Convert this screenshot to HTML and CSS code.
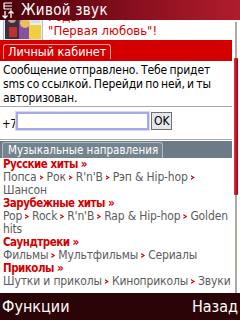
FILE: index.html
```html
<!DOCTYPE html>
<html lang="ru">
<head>
    <meta charset="UTF-8">
    <title>Живой звук</title>
    <link rel="stylesheet" href="styles.css">
</head>
<body>
    <div class="title-bar">
        <svg class="title-icon" width="14" height="18" viewBox="0 0 14 18">
            <path d="M3 2h8M3 5h8M3 8h8M3 2v6" stroke="#fff" stroke-width="1.2" fill="none"/>
            <path d="M4 10v7M1.5 14.5l2.5 2.5 2.5-2.5" stroke="#fff" stroke-width="1.3" fill="none"/>
            <path d="M10 17v-7M7.5 12.5l2.5-2.5 2.5 2.5" stroke="#fff" stroke-width="1.3" fill="none"/>
        </svg>
        <span class="title-text">Живой звук</span>
    </div>

    <div class="screen">
        <div class="page">
            <div class="promo">
                <svg class="promo-pic" width="40" height="30" viewBox="0 0 40 30">
                    <rect x="0.5" y="0.5" width="39" height="29" fill="#f4efe0" stroke="#a8c0e8"/>
                    <rect x="2" y="2" width="14" height="26" fill="#3a3040"/>
                    <circle cx="9" cy="8" r="4" fill="#c0a090"/>
                    <rect x="16" y="4" width="10" height="24" fill="#8850a0"/>
                    <circle cx="22" cy="12" r="5" fill="#e8c060"/>
                    <rect x="26" y="14" width="12" height="14" fill="#f0d040"/>
                    <rect x="28" y="4" width="9" height="8" fill="#d0e0f0"/>
                    <rect x="6" y="16" width="8" height="10" fill="#c03030"/>
                </svg>
                <div class="promo-text">
                    <div>Годы</div>
                    <div>"Первая любовь"!</div>
                </div>
            </div>

            <div class="section section-red">
                <span class="tab">Личный кабинет</span>
            </div>

            <div class="message">
                Сообщение отправлено. Тебе придет<br>
                sms со ссылкой. Перейди по ней, и ты<br>
                авторизован.
            </div>

            <div class="phone-row">
                <span class="prefix">+7</span>
                <span class="phone-input"></span>
                <span class="ok-btn">OK</span>
            </div>

            <div class="section section-grey">
                <span class="tab">Музыкальные направления</span>
            </div>

            <div class="genres">
                <div class="genre-title">Русские хиты »</div>
                <div class="genre-links">Попса<i class="arr"></i>Рок<i class="arr"></i>R'n'B<i class="arr"></i>Рэп &amp; Hip-hop<i class="arr"></i> Шансон</div>
                <div class="genre-title">Зарубежные хиты »</div>
                <div class="genre-links">Pop<i class="arr"></i>Rock<i class="arr"></i>R'n'B<i class="arr"></i>Rap &amp; Hip-hop<i class="arr"></i>Golden hits</div>
                <div class="genre-title">Саундтреки »</div>
                <div class="genre-links">Фильмы<i class="arr"></i>Мультфильмы<i class="arr"></i>Сериалы</div>
                <div class="genre-title">Приколы »</div>
                <div class="genre-links">Шутки и приколы<i class="arr"></i>Киноприколы<i class="arr"></i>Звуки</div>
            </div>
        </div>
        <div class="scrollbar">
            <div class="thumb"></div>
        </div>
    </div>

    <div class="softkeys">
        <span>Функции</span>
        <span>Назад</span>
    </div>
</body>
</html>
```

FILE: styles.css
```css
* {
    box-sizing: border-box;
}

html, body {
    height: 100%;
    overflow: hidden;
}

body {
    margin: 0;
    width: 240px;
    height: 320px;
    display: flex;
    flex-direction: column;
    font-family: "DejaVu Sans", sans-serif;
    font-stretch: condensed;
    background: #fff;
}

.title-bar {
    height: 20px;
    flex: none;
    display: flex;
    align-items: center;
    gap: 6px;
    padding-left: 1px;
    background: linear-gradient(to right, #4a0008, #8c1020 60%, #b01c2c);
}

.title-icon {
    flex: none;
}

.title-text {
    color: #fff;
    font-size: 15px;
    letter-spacing: 0.3px;
}

.screen {
    flex: 1;
    display: flex;
    overflow: hidden;
}

.page {
    width: 232px;
    overflow: hidden;
    font-size: 12px;
    line-height: 14px;
}

.promo {
    display: flex;
    gap: 5px;
    margin-top: -11px;
    padding-left: 3px;
    height: 31px;
    overflow: hidden;
}

.promo-pic {
    flex: none;
    margin-top: 2px;
}

.promo-text {
    color: #d40000;
    font-size: 13px;
    line-height: 14px;
    padding-top: 1px;
}

.section {
    display: flex;
    align-items: flex-end;
    padding-left: 3px;
}

.section .tab {
    color: #fff;
    height: 16px;
    padding: 0 4px;
    line-height: 14px;
    border: 1px solid;
    border-bottom: none;
    border-radius: 3px 3px 0 0;
}

.section-red {
    background: #d40000;
    height: 21px;
    padding-bottom: 2px;
}

.section-red .tab {
    border-color: #ff9a9a;
    height: 15px;
    font-size: 12.5px;
}

.section-grey {
    background: #6b7b88;
    height: 17px;
    margin-top: 1px;
    padding-left: 2px;
}

.section-grey .tab {
    border-color: #b0bcc6;
    background: #74848f;
    font-size: 11.5px;
    padding: 0 4px 0 5px;
}

.message {
    padding: 2px 1px 2px 3px;
    color: #000;
    height: 46px;
    white-space: nowrap;
    letter-spacing: -0.1px;
    word-spacing: -1px;
    border-bottom: 1px solid #a8a8a8;
}

.phone-row {
    display: flex;
    align-items: flex-end;
    height: 33px;
    padding: 0 0 9px 2px;
    border-bottom: 1px solid #a8a8a8;
}

.prefix {
    flex: none;
    font-size: 11.5px;
    line-height: 12px;
    letter-spacing: -0.5px;
}

.phone-input {
    width: 133px;
    height: 18px;
    border: 2px solid #a8a8e8;
    outline: 1px solid #d8d8f4;
    background: #fff;
}

.ok-btn {
    height: 18px;
    width: 21px;
    margin-left: 2px;
    background: #e6e6ee;
    border: 1px solid #707070;
    font-size: 12px;
    line-height: 16px;
    text-align: center;
}

.genres {
    padding: 0 0 0 3px;
}

.genre-title {
    color: #d40000;
    font-weight: bold;
    font-size: 11.5px;
    letter-spacing: -0.5px;
    line-height: 13px;
}

.genre-links {
    color: #5c5c5c;
    line-height: 13px;
    letter-spacing: -0.15px;
}

.arr {
    display: inline-block;
    width: 4px;
    height: 5px;
    margin: 0 3px 1px 3px;
    background: #d40000;
    clip-path: polygon(0 0, 100% 50%, 0 100%, 0 70%, 50% 50%, 0 30%);
}

.scrollbar {
    width: 8px;
    padding: 2px 2px 0 2px;
    display: flex;
    flex-direction: column;
}

.scrollbar::before {
    content: "";
    display: block;
    height: 36px;
    width: 2px;
    margin-left: 1px;
    background: #b0a8a0;
}

.thumb {
    width: 4px;
    height: 137px;
    background: linear-gradient(to right, #e83040, #c01020 60%, #900818);
    border-radius: 1px;
}

.scrollbar::after {
    content: "";
    display: block;
    flex: 1;
    width: 2px;
    margin-left: 1px;
    background: #b0a8a0;
}

.softkeys {
    height: 27px;
    flex: none;
    display: flex;
    justify-content: space-between;
    align-items: center;
    padding: 0 2px;
    background: #2a0406;
    color: #fff;
    font-size: 16px;
}
```
